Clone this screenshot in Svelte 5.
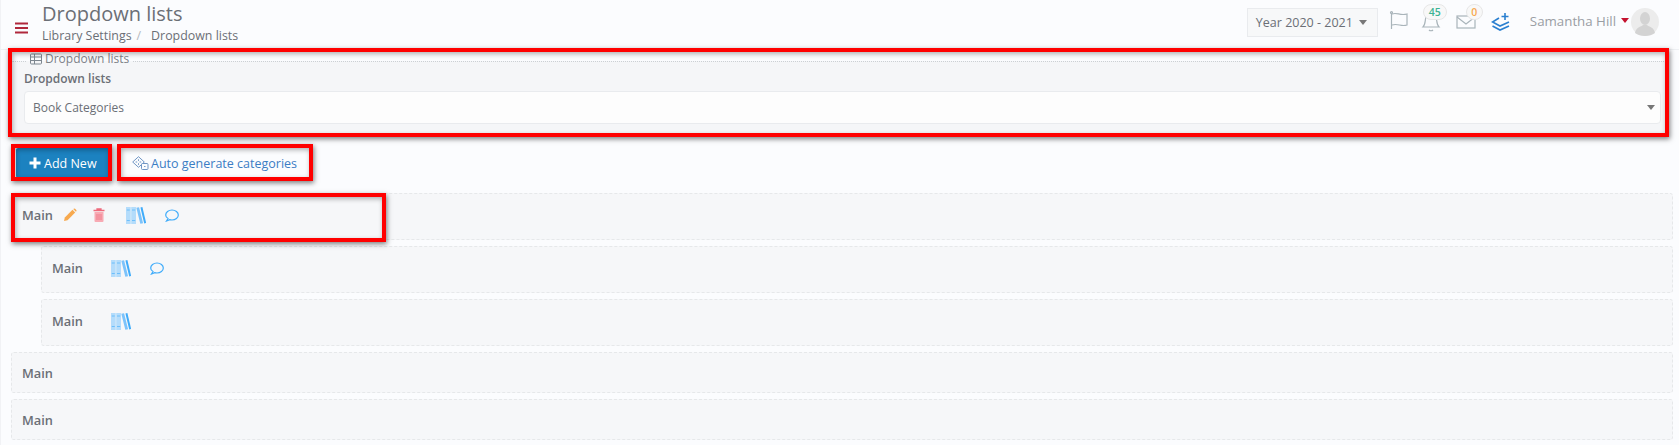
<script>
  const rows = [
    { indent: false, height: 47, actions: true, book: true, comment: true },
    { indent: true, height: 47, spacer: true, book: true, comment: true },
    { indent: true, height: 47, spacer: true, book: true },
    { indent: false, height: 41, short: true },
    { indent: false, height: 41, short: true }
  ];
</script>

<div class="page">
  <header class="topbar">
    <div class="title-side">
      <svg class="menu" viewBox="0 0 13 12" width="13" height="12"><path d="M0 1.500h13M0 6h13M0 10.500h13" stroke="#b0283c" stroke-width="2"/></svg>
      <div>
        <h1>Dropdown lists</h1>
        <div class="crumbs"><span>Library Settings</span><span class="sep">/</span><span>Dropdown lists</span></div>
      </div>
    </div>
    <div class="top-right">
      <div class="year">Year 2020 - 2021 <i class="caret"></i></div>
      <svg class="flag" viewBox="0 0 20 20" width="20" height="20" fill="none" stroke="#a9b4ba" stroke-width="1.2"><circle cx="2.500" cy="2.600" r="1"/><path d="M2.500 3.500V19M3 4c5-2 8 2 15 0v11c-6 2-9-2-15 0"/></svg>
      <div class="bell">
        <svg viewBox="0 0 20 20" width="20" height="20" fill="none" stroke="#a9b4ba" stroke-width="1.2"><path d="M2 15c2-2 2-4 2.500-8C5 3 8 2 10 2s5 1 5.500 5c.5 4 .5 6 2.500 8zM8 18c1 1 3 1 4 0"/></svg>
        <span class="badge green">45</span>
      </div>
      <div class="mail">
        <svg viewBox="0 0 20 16" width="20" height="16" fill="none" stroke="#a9b4ba" stroke-width="1.2"><rect x="1" y="2" width="18" height="12"/><path d="M1 3l9 7 9-7"/></svg>
        <span class="badge orange">0</span>
      </div>
      <svg class="layers" viewBox="0 0 20 20" width="20" height="20" fill="none" stroke="#2a7fd0" stroke-width="1.6"><path d="M14 1v7M10.500 4.500h7M8 6L1.500 10 9 14l9-4M1.500 14 9 18l9-4"/></svg>
      <div class="user">Samantha Hill <i class="caret red"></i></div>
      <svg class="avatar" viewBox="0 0 28 28" width="28" height="28"><circle cx="14" cy="14" r="14" fill="#ececec"/><ellipse cx="14" cy="10.500" rx="5" ry="6.500" fill="#d3d3d3"/><path d="M4 25c1-6 6-6 8-8h4c2 2 7 2 8 8-5 4-15 4-20 0z" fill="#d3d3d3"/></svg>
    </div>
  </header>

  <main class="content">
    <fieldset class="panel">
      <legend>
        <svg viewBox="0 0 12 12" width="12" height="12" fill="none" stroke="#7d8790"><rect x=".5" y="1" width="11" height="10" rx="1"/><path d="M.5 4h11M.5 7.500h11M4.500 1v10"/></svg>
        Dropdown lists
      </legend>
      <label for="dd">Dropdown lists</label>
      <div class="select" id="dd">Book Categories<i class="caret"></i></div>
    </fieldset>

    <div class="buttons">
      <button class="add"><svg viewBox="0 0 12 12" width="12" height="12"><path d="M6 .5v11M.5 6h11" stroke="#fff" stroke-width="3"/></svg>Add New</button>
      <button class="auto">
        <svg viewBox="0 0 17 14" width="17" height="14" fill="none" stroke="#6f95c4"><path d="M6.500 .7l5.800 5.300-5.800 5.300L.7 6z"/><rect x="9.500" y="7.500" width="6.500" height="6" rx="1" fill="#fbfcfe"/><path d="M4 6h.8M8 6h.8M6.500 3.700v.8M6.500 7.700v.8M12.500 10.500h.6" stroke-linecap="round"/></svg>
        Auto generate categories
      </button>
    </div>

    <div class="rows">
      {#each rows as row}
        <div class="row" class:indent={row.indent} class:short={row.short} style="height: {row.height}px">
          <span class="name" class:wide={row.spacer}>Main</span>
          {#if row.actions}
            <svg class="act pencil" viewBox="0 0 14 14" width="14" height="14"><path d="M1 13l.8-3.500L9.500 1.800l2.700 2.700-7.700 7.700z" fill="#f7a94f"/><path d="M10.200 1.100l.6-.4a1 1 0 0 1 1.300 0l1.200 1.200a1 1 0 0 1 0 1.300l-.4.600z" fill="#f7a94f"/></svg>
            <svg class="act trash" viewBox="0 0 12 14" width="12" height="14"><path d="M.5 2.500h11M4 2.500V1h4v1.500" stroke="#ee6a7c" fill="none" stroke-width="1.300"/><path d="M1.500 4h9v9a1 1 0 0 1-1 1h-7a1 1 0 0 1-1-1z" fill="#f8aab4"/><path d="M4 6v6M6 6v6M8 6v6" stroke="#ee6a7c" stroke-width=".7"/></svg>
          {/if}
          {#if row.book}
            <svg class="act book" viewBox="0 0 20 17" width="20" height="17" fill="none"><path d="M0 0h4.700v17H0zM5.200 0h4.800v17H5.200z" fill="#b4dcfb"/><path d="M.8 3h3M.8 13.500h3M6 3h3.200M6 13.500h3.200" stroke="#5cb8fb" stroke-width=".8"/><path d="M11.700 .5l4 16" stroke="#7cc3fb" stroke-width="2.800"/><path d="M15.400 .3l3.800 16" stroke="#40acfa" stroke-width="2"/></svg>
          {/if}
          {#if row.comment}
            <svg class="act comment" viewBox="0 0 14 13" width="14" height="13" fill="none" stroke="#40acfa" stroke-width="1.200"><path d="M3 9.500C1.500 8.700.7 7.500.7 6c0-2.800 2.800-5 6.300-5s6.300 2.200 6.300 5-2.800 5-6.300 5c-.8 0-1.600-.1-2.300-.3L1.500 12z"/></svg>
          {/if}
        </div>
      {/each}
    </div>
  </main>

  <div class="mark m1"></div>
  <div class="mark m2"></div>
  <div class="mark m3"></div>
  <div class="mark m4"></div>
</div>

<style>
  :global(body) {
    margin: 0;
    background: #fbfcfe;
    font-family: "Open Sans", sans-serif;
    color: #6b6f76;
    overflow: hidden;
  }

  .page {
    position: relative;
    height: 445px;
    box-shadow: inset 1px 0 #f1f2f5;
  }

  .topbar {
    display: flex;
    justify-content: space-between;
    height: 49px;
    padding: 0 20px 0 15px;
    border-bottom: 1px solid #eef0f3;
  }

  .title-side {
    display: flex;
    align-items: flex-end;
    gap: 14px;
  }

  .menu {
    margin-bottom: 15px;
  }

  h1 {
    margin: 0;
    font-size: 20px;
    font-weight: 400;
    line-height: 26px;
    color: #6b6f76;
  }

  .crumbs {
    display: flex;
    gap: 5px;
    font-size: 12.400px;
    line-height: 17px;
    margin-bottom: 5px;
  }

  .sep {
    color: #b5b9bf;
    margin-right: 5px;
  }

  .top-right {
    display: flex;
    align-items: center;
    height: 44px;
  }

  .year {
    display: flex;
    align-items: center;
    gap: 6px;
    height: 27px;
    padding: 0 10px 0 8px;
    background: #f7f8f9;
    border: 1px solid #e9ebee;
    font-size: 12.500px;
    color: #6b6f76;
    margin-right: 11px;
  }

  .caret {
    display: inline-block;
    width: 0;
    height: 0;
    border: 4px solid transparent;
    border-top: 5px solid #777;
    border-bottom: 0;
  }

  .caret.red {
    border-top-color: #c4122f;
  }

  .flag {
    margin-top: -4px;
  }

  .bell, .mail {
    position: relative;
    display: flex;
  }

  .bell {
    margin-left: 12px;
    margin-top: -1px;
  }

  .mail {
    margin-left: 15px;
  }

  .layers {
    margin-left: 15px;
  }

  .badge {
    position: absolute;
    box-sizing: border-box;
    height: 16px;
    border-radius: 9px;
    border: 1px solid #e7e7e7;
    background: #f8f8f8;
    font-size: 10.500px;
    font-weight: 600;
    line-height: 14px;
    text-align: center;
  }

  .badge.green {
    top: -8px;
    left: 2px;
    width: 24px;
    color: #3eb393;
  }

  .badge.orange {
    top: -10px;
    left: 10px;
    width: 17px;
    color: #f7a94f;
  }

  .user {
    display: flex;
    align-items: center;
    gap: 5px;
    margin: 0 0 3px 19px;
    font-size: 13.300px;
    color: #9a9ea4;
  }

  .avatar {
    margin-left: 2px;
  }

  .content {
    padding: 0 6px 0 11px;
  }

  .panel {
    box-sizing: border-box;
    height: 82px;
    margin: 2px 4px 0 0;
    padding: 0 7px 11px 14px;
    border: 1px dotted #ccd0d4;
    background: #f5f6f8;
    border-radius: 2px;
  }

  legend {
    display: flex;
    align-items: center;
    gap: 3px;
    margin-left: 1px;
    padding: 0 3px 5px;
    font-size: 12px;
    line-height: 14px;
    color: #7d8288;
  }

  label {
    display: block;
    font-size: 12px;
    font-weight: 600;
    line-height: 16px;
    margin: 0 0 4px -2px;
    color: #6b6f76;
  }

  .select {
    display: flex;
    align-items: center;
    justify-content: space-between;
    height: 31px;
    margin-left: -2px;
    padding: 0 5px 0 8px;
    background: #fdfdfd;
    border: 1px solid #e9ebee;
    border-radius: 4px;
    font-size: 12px;
    color: #6b6f76;
  }

  .buttons {
    display: flex;
    gap: 10px;
    margin: 14px 0 0 5px;
  }

  button {
    display: flex;
    align-items: center;
    height: 30px;
    border: 0;
    font-family: inherit;
    font-size: 12.500px;
    cursor: pointer;
  }

  .add {
    gap: 3px;
    width: 95px;
    padding: 0 0 0 13px;
    background: #1c82c0;
    color: #fff;
    border-radius: 2px;
  }

  .auto {
    gap: 2px;
    padding: 0 11px;
    background: none;
    color: #3b7dc4;
  }

  .rows {
    display: flex;
    flex-direction: column;
    gap: 6px;
    margin-top: 15px;
  }

  .row {
    display: flex;
    align-items: flex-start;
    padding: 13px 10px 0;
    box-sizing: border-box;
    background: #f6f7f9;
    border: 1px dashed #e6e8ea;
    border-radius: 3px;
  }

  .row.short {
    padding-top: 12px;
  }

  .row.indent {
    margin-left: 30px;
  }

  .name {
    font-size: 12.800px;
    font-weight: 600;
    line-height: 16px;
    width: 30px;
    color: #6b6f76;
  }

  .name.wide {
    width: 59px;
  }

  .act {
    flex: none;
  }

  .pencil {
    margin-left: 11px;
    margin-top: 1px;
  }

  .trash {
    margin-left: 16px;
    margin-top: 1px;
  }

  .book {
    margin-left: 21px;
  }

  .wide + .book {
    margin-left: 0;
  }

  .comment {
    margin-left: 19px;
    margin-top: 2px;
  }

  .mark {
    position: absolute;
    box-sizing: border-box;
    border: 4px solid #f00;
    box-shadow: 1px 2px 5px rgba(0, 0, 0, 0.5), inset 1px 2px 5px rgba(0, 0, 0, 0.3);
  }

  .m1 { left: 8px; top: 48px; width: 1661px; height: 89px; }
  .m2 { left: 11px; top: 144px; width: 101px; height: 37px; }
  .m3 { left: 117px; top: 144px; width: 196px; height: 37px; }
  .m4 { left: 11px; top: 193px; width: 375px; height: 49px; }
</style>
